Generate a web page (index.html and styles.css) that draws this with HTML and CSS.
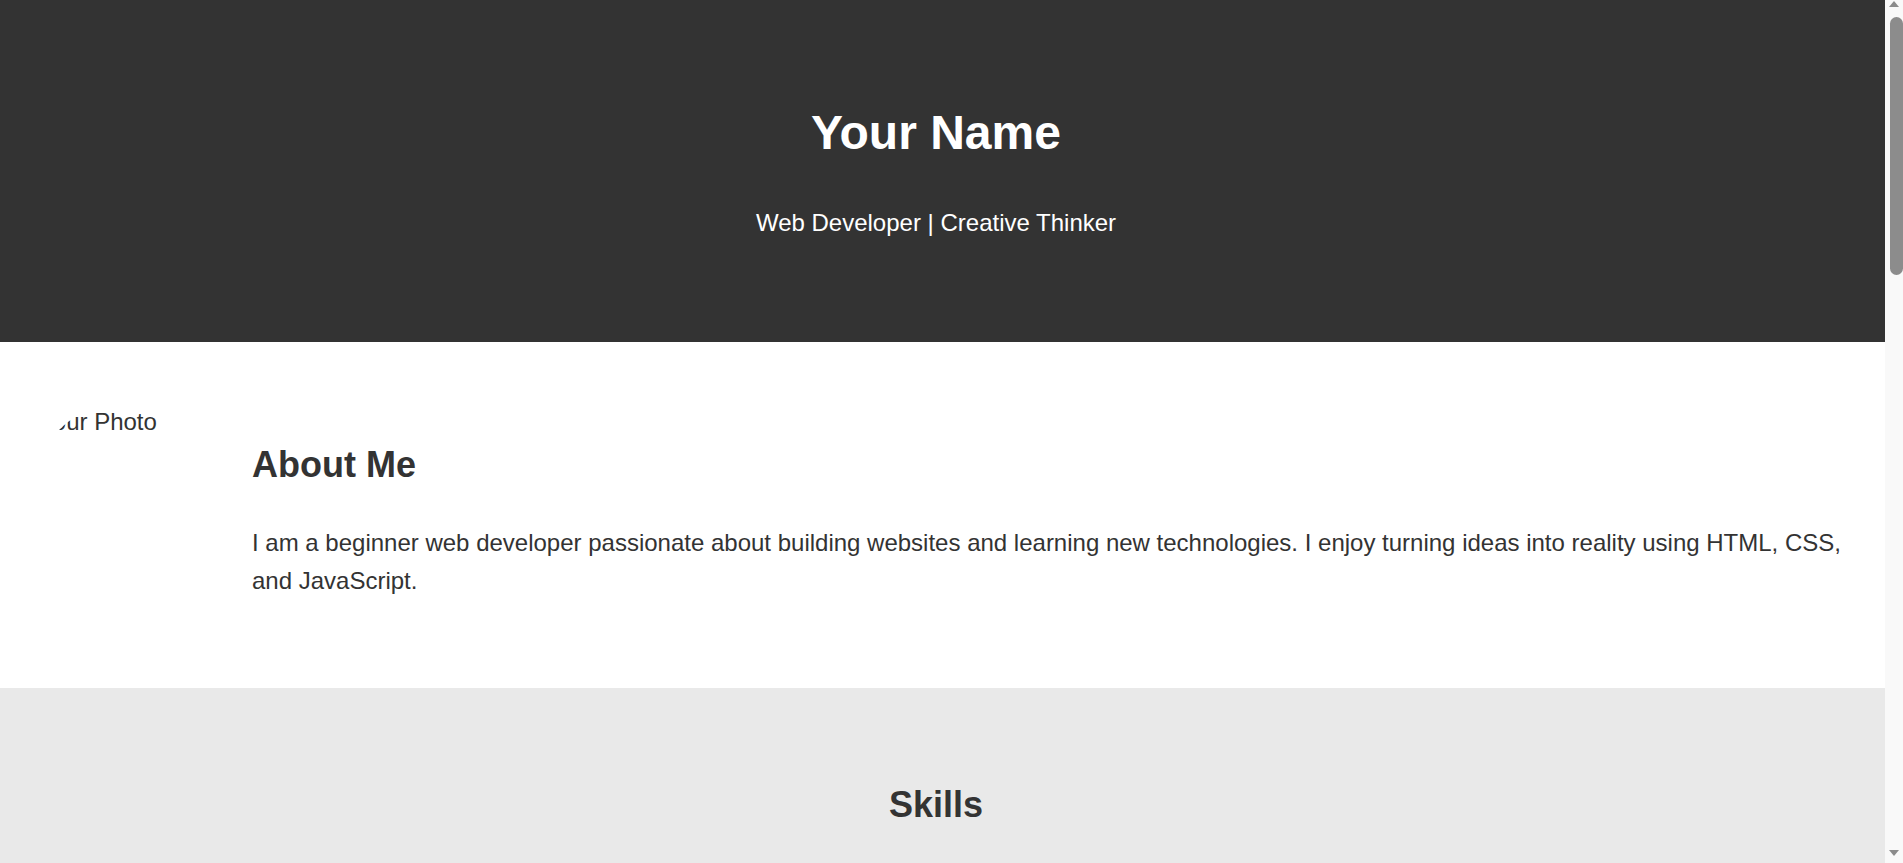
FILE: index.html
```html
<!DOCTYPE html>
<html lang="en">
<head>
<meta charset="UTF-8">
<title>Your Name - Portfolio</title>
<link rel="stylesheet" href="styles.css">
</head>
<body>
  <header class="hero">
    <h1 class="hero-title">Your Name</h1>
    <p class="hero-subtitle">Web Developer | Creative Thinker</p>
  </header>

  <section class="about">
    <div class="photo"><span class="photo-alt">Your Photo</span></div>
    <div class="about-text">
      <h2 class="section-title">About Me</h2>
      <p class="about-copy">I am a beginner web developer passionate about building websites and learning new technologies. I enjoy turning ideas into reality using HTML, CSS, and JavaScript.</p>
    </div>
  </section>

  <section class="skills">
    <h2 class="section-title">Skills</h2>
    <ul class="skill-list">
      <li class="skill">HTML</li>
      <li class="skill">CSS</li>
      <li class="skill">JavaScript</li>
    </ul>
  </section>

  <footer class="footer">
    <p>&copy; 2024 Your Name</p>
  </footer>

  <div class="scrollbar" aria-hidden="true">
    <svg class="scroll-arrow scroll-up" width="18" height="8" viewBox="0 0 18 8"><path d="M4 7 L9 1 L14 7 Z" fill="#8b8b8b"/></svg>
    <div class="scroll-thumb"></div>
    <svg class="scroll-arrow scroll-down" width="18" height="8" viewBox="0 0 18 8"><path d="M4 1 L14 1 L9 7 Z" fill="#8b8b8b"/></svg>
  </div>
</body>
</html>
```

FILE: styles.css
```css
* {
  box-sizing: border-box;
}

html, body {
  margin: 0;
  padding: 0;
}

html {
  overflow: hidden;
}

body {
  font-family: "Liberation Sans", Arial, sans-serif;
  font-size: 24px;
  line-height: 1.6;
  color: #333333;
  background: #ffffff;
  margin-right: 18px;
}

.hero {
  background: #333333;
  color: #ffffff;
  text-align: center;
  padding: 63px 33px 76px 20px;
}

.hero-title {
  font-size: 48px;
  margin: 32px 0;
}

.hero-subtitle {
  margin: 24px 0;
}

.about {
  display: flex;
  align-items: flex-start;
  gap: 63px;
  padding: 64px 40px 63px;
}

.photo {
  flex: 0 0 150px;
  width: 150px;
  height: 150px;
  border-radius: 50%;
  overflow: hidden;
  white-space: nowrap;
  margin-left: -1px;
}

.photo-alt {
  display: block;
  margin-top: -3px;
}

.about-text {
  flex: 1;
}

.section-title {
  font-size: 36px;
  margin: 30px 0;
}

.about-copy {
  margin: 24px 0;
}

.skills {
  background: #e9e9e9;
  text-align: center;
  padding: 58px 53px 60px 40px;
}

.skill-list {
  list-style: none;
  margin: 60px 0 0;
  padding: 0;
  display: flex;
  justify-content: center;
  gap: 24px;
}

.skill {
  background: #ffffff;
  padding: 10px 24px;
  border-radius: 8px;
}

.footer {
  background: #333333;
  color: #ffffff;
  text-align: center;
  padding: 20px;
}

.scrollbar {
  position: fixed;
  top: 0;
  right: 0;
  width: 18px;
  height: 100vh;
  background: #f9f9f9;
}

.scroll-arrow {
  position: absolute;
  left: 0;
  display: block;
}

.scroll-up {
  top: 0;
}

.scroll-down {
  bottom: 6px;
}

.scroll-thumb {
  position: absolute;
  top: 17px;
  left: 5px;
  width: 13px;
  height: 258px;
  border-radius: 7px;
  background: #8c8c8c;
}
```
